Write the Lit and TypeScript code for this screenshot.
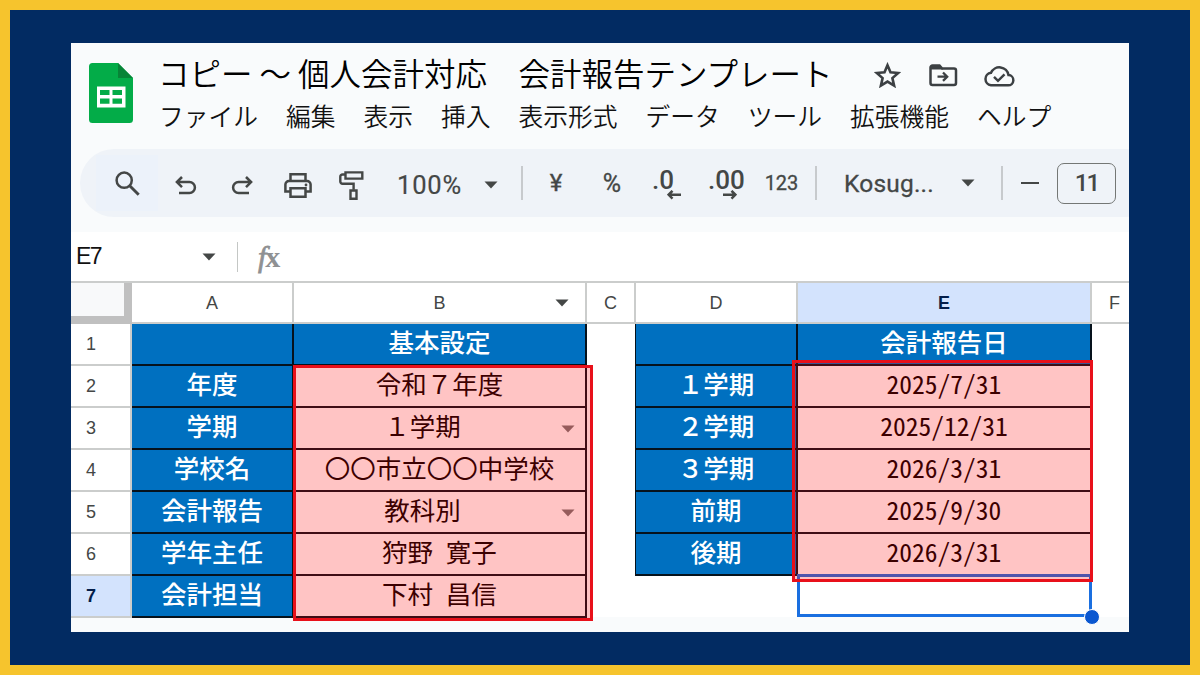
import { LitElement, html, css, svg, nothing } from 'lit'
import { customElement, property, state } from 'lit/decorators.js'
import { classMap } from 'lit/directives/class-map.js'

type Kind = 'plain' | 'label' | 'value'
type Cell = { text?: string; kind: Kind; dropdown?: boolean }

const TITLE = 'コピー ～ 個人会計対応　会計報告テンプレート'
const MENUS = ['ファイル', '編集', '表示', '挿入', '表示形式', 'データ', 'ツール', '拡張機能', 'ヘルプ']
const COLUMNS = ['A', 'B', 'C', 'D', 'E', 'F']

const label = (text = ''): Cell => ({ text, kind: 'label' })
const value = (text: string, dropdown = false): Cell => ({ text, kind: 'value', dropdown })
const blank: Cell = { kind: 'plain' }

const ROWS: Cell[][] = [
  [label(), label('基本設定'), blank, label(), label('会計報告日'), blank],
  [label('年度'), value('令和７年度'), blank, label('１学期'), value('2025/7/31'), blank],
  [label('学期'), value('１学期', true), blank, label('２学期'), value('2025/12/31'), blank],
  [label('学校名'), value('〇〇市立〇〇中学校'), blank, label('３学期'), value('2026/3/31'), blank],
  [label('会計報告'), value('教科別', true), blank, label('前期'), value('2025/9/30'), blank],
  [label('学年主任'), value('狩野 寛子'), blank, label('後期'), value('2026/3/31'), blank],
  [label('会計担当'), value('下村 昌信'), blank, blank, blank, blank],
]

const caret = html`<svg class="caret" width="14" height="8" viewBox="0 0 14 8">
  <path d="M0.5 0.5h13L7 7.5z" fill="currentColor" />
</svg>`

const icons = {
  logo: svg`
    <path d="M3.500 0H29l15 15v41.500a3.500 3.500 0 0 1-3.500 3.500h-37A3.500 3.500 0 0 1 0 56.500v-53A3.500 3.500 0 0 1 3.500 0z" fill="#03ac48" />
    <path d="M29 0l15 15H29z" fill="#078437" />
    <path d="M8 23.500h28.500v21H8z" fill="#fff" />
    <path d="M11 27h9.500v5H11zM23.500 27H33v5h-9.500zM11 35.500h9.500v5.200H11zM23.500 35.500H33v5.200h-9.500z" fill="#03ac48" />`,
  star: svg`<path d="M13.500 3.200l3 7.100 7.700.7-5.800 5.100 1.700 7.500-6.600-4-6.600 4 1.700-7.500L2.800 11l7.700-.7z" fill="none" stroke="currentColor" stroke-width="2.600" />`,
  folder: svg`
    <path d="M1.500 3.500a2 2 0 0 1 2-2h7l2.700 3H25a2 2 0 0 1 2 2V19a2 2 0 0 1-2 2H3.500a2 2 0 0 1-2-2z" fill="none" stroke="currentColor" stroke-width="2.500" />
    <path d="M1.500 2h9l3.500 3.500H1.500z" fill="currentColor" />
    <path d="M8.500 12.700h9M14 8.500l4.200 4.200-4.200 4.200" fill="none" stroke="currentColor" stroke-width="2.300" />`,
  cloud: svg`
    <path d="M8 21.300h17a5.100 5.100 0 0 0 .5-10.200A9.200 9.200 0 0 0 8 8.800 6.300 6.300 0 0 0 8 21.300z" fill="none" stroke="currentColor" stroke-width="2.500" />
    <path d="M11 12.800l4 4 6.500-6.500" fill="none" stroke="currentColor" stroke-width="2.400" />`,
  search: svg`
    <circle cx="9.200" cy="9.200" r="7.600" fill="none" stroke="currentColor" stroke-width="2.500" />
    <path d="M14.700 14.700l9 9" fill="none" stroke="currentColor" stroke-width="2.900" />`,
  undo: svg`<path d="M7 1L1.900 6.100 7 11.200M2.200 6.100h12.200a5.500 5.500 0 0 1 0 11H4" fill="none" stroke="currentColor" stroke-width="2.500" />`,
  redo: svg`<path d="M15 1l5.100 5.100L15 11.200M19.800 6.100H7.600a5.500 5.500 0 0 0 0 11H18" fill="none" stroke="currentColor" stroke-width="2.500" />`,
  print: svg`
    <path d="M6.500 8V1.300h15V8M6.500 18.500H1.400v-7A3.500 3.500 0 0 1 4.900 8h18.200a3.500 3.500 0 0 1 3.500 3.500v7h-5.100" fill="none" stroke="currentColor" stroke-width="2.500" />
    <path d="M6.500 15.200h15v8.500h-15z" fill="none" stroke="currentColor" stroke-width="2.500" />
    <circle cx="22" cy="12" r="1.400" fill="currentColor" />`,
  roller: svg`
    <path d="M6.500 1.400h16.800v6.200H6.500zM6.500 3.500H3.500a2.200 2.200 0 0 0-2.200 2.200v4.800a2.200 2.200 0 0 0 2.200 2.200h11.100v6" fill="none" stroke="currentColor" stroke-width="2.400" />
    <path d="M11.500 19.500h6v8.200h-6z" fill="none" stroke="currentColor" stroke-width="2.400" />`,
  left: svg`<path d="M5.500.8L1.600 4.700l3.900 3.900M2 4.700h12" fill="none" stroke="currentColor" stroke-width="2.500" />`,
  right: svg`<path d="M8.500.8l3.900 3.900-3.900 3.900M12 4.700H0" fill="none" stroke="currentColor" stroke-width="2.500" />`,
}

function icon(name: keyof typeof icons, w: number, h: number) {
  return html`<svg width=${w} height=${h} viewBox="0 0 ${w} ${h}">${icons[name]}</svg>`
}

@customElement('sheet-header')
export class SheetHeader extends LitElement {
  static styles = css`
    :host {
      display: block;
      height: 106px;
      color: #111;
      font-family: 'Noto Sans CJK JP', sans-serif;
    }
    .header {
      display: flex;
      padding: 19.5px 0 0 18px;
    }
    .names {
      margin: -2.5px 0 0 25px;
      white-space: nowrap;
    }
    .top {
      display: flex;
      align-items: center;
      height: 24px;
      color: #3c4043;
    }
    .title {
      color: #000;
      font-size: 31.5px;
      font-weight: 350;
      line-height: 24px;
    }
    .top svg {
      display: block;
    }
    .star {
      margin: 6px 28px 0 41px;
    }
    .cloud {
      margin: 6px 0 0 25px;
    }
    .folder {
      margin-top: 6px;
    }
    .menus {
      display: flex;
      gap: 28px;
      margin: 16px 0 0 1px;
      font-size: 24.75px;
      font-weight: 350;
      line-height: 30px;
    }
  `

  render() {
    return html`
      <div class="header">
        ${icon('logo', 44, 60)}
        <div class="names">
          <div class="top">
            <span class="title">${TITLE}</span>
            <span class="star">${icon('star', 27, 26)}</span>
            <span class="folder">${icon('folder', 29, 23)}</span>
            <span class="cloud">${icon('cloud', 32, 23)}</span>
          </div>
          <div class="menus">${MENUS.map((m) => html`<span>${m}</span>`)}</div>
        </div>
      </div>
    `
  }
}

@customElement('sheet-toolbar')
export class SheetToolbar extends LitElement {
  static styles = css`
    :host {
      display: block;
      height: 83px;
      padding-left: 9px;
      font-family: Roboto, 'Liberation Sans', sans-serif;
    }
    svg {
      display: block;
    }
    .bar {
      display: flex;
      align-items: center;
      box-sizing: border-box;
      width: 1080px;
      height: 68px;
      padding-left: 16px;
      border-radius: 34px;
      background: #eff3f8;
      color: #444746;
      font-size: 24px;
    }
    .slot {
      display: flex;
      flex: none;
      align-items: center;
      justify-content: center;
      width: 56px;
      height: 68px;
    }
    .search {
      width: 62px;
      height: 56px;
      background: #ecf2fa;
    }
    .low {
      padding-top: 5px;
      box-sizing: border-box;
    }
    .roller {
      width: 50px;
    }
    .zoom {
      display: flex;
      align-items: center;
      justify-content: space-between;
      width: 101px;
      margin: 3px 23px 0 21px;
      font-size: 25.5px;
      letter-spacing: 0.8px;
      -webkit-text-stroke: 0.2px currentColor;
    }
    .sep {
      flex: none;
      width: 2px;
      height: 34px;
      background: #c7cacd;
    }
    .yen {
      margin-left: 5px;
      font-size: 24px;
      -webkit-text-stroke: 0.4px currentColor;
    }
    .percent {
      font-size: 25px;
    }
    .decimal {
      flex-direction: column;
      align-items: flex-start;
      box-sizing: border-box;
      padding: 3px 0 0 12px;
      font-size: 26px;
      font-weight: 500;
      line-height: 22px;
    }
    .decimal .arrow {
      margin: -1px 0 0 15px;
    }
    .num {
      width: 63px;
      padding-right: 4px;
      box-sizing: border-box;
      font-size: 20px;
    }
    .num,
    .percent {
      -webkit-text-stroke: 0.3px currentColor;
    }
    .font {
      display: flex;
      align-items: center;
      justify-content: space-between;
      width: 131px;
      margin: 0 26px 0 27px;
      font-size: 24.5px;
      letter-spacing: 0.2px;
      -webkit-text-stroke: 0.3px currentColor;
    }
    .minus {
      width: 18px;
      height: 2.5px;
      margin: 0 18px 0 18px;
      background: #444746;
    }
    .size {
      display: flex;
      align-items: center;
      justify-content: center;
      width: 57px;
      height: 39px;
      border: 1.5px solid #747775;
      border-radius: 7px;
      font-size: 24px;
      font-weight: 500;
      letter-spacing: -2px;
    }
  `

  render() {
    return html`
      <div class="bar">
        <span class="slot search">${icon('search', 25, 25)}</span>
        <span class="slot low">${icon('undo', 22, 19)}</span>
        <span class="slot low">${icon('redo', 22, 19)}</span>
        <span class="slot low">${icon('print', 28, 25)}</span>
        <span class="slot low roller">${icon('roller', 25, 29)}</span>
        <span class="zoom"><span>100%</span>${caret}</span>
        <span class="sep"></span>
        <span class="slot yen">¥</span>
        <span class="slot percent">%</span>
        <span class="slot decimal">.0<span class="arrow">${icon('left', 14, 10)}</span></span>
        <span class="slot decimal">.00<span class="arrow">${icon('right', 14, 10)}</span></span>
        <span class="slot num">123</span>
        <span class="sep"></span>
        <span class="font"><span>Kosug...</span>${caret}</span>
        <span class="sep"></span>
        <span class="minus"></span>
        <span class="size">11</span>
      </div>
    `
  }
}

@customElement('sheet-grid')
export class SheetGrid extends LitElement {
  static styles = css`
    :host {
      display: block;
      position: relative;
      font-family: 'Liberation Sans', sans-serif;
      color: #444746;
    }
    .row {
      display: grid;
      grid-template-columns: 61px 162px 293px 49px 162px 294px 60px;
      height: 42px;
    }
    .row > div {
      display: flex;
      position: relative;
      align-items: center;
      justify-content: center;
      box-sizing: border-box;
      border-right: 2px solid transparent;
      border-bottom: 2px solid transparent;
    }
    .heads {
      height: 43px;
      border-top: 2px solid #cbcdcc;
      box-sizing: border-box;
      background: #fff;
    }
    .row > .head {
      padding-top: 1px;
      border-color: #cbcdcc;
      font-size: 18px;
    }
    .row > .num {
      justify-content: flex-start;
      padding-left: 15px;
    }
    .row > .corner {
      border-right: 8px solid #c0c0c0;
      border-bottom: 8px solid #c0c0c0;
      background: #f8f9fa;
    }
    .row > .active {
      background: #d3e3fd;
      color: #041e49;
      font-weight: 700;
    }
    .row > .last {
      padding-right: 13px;
    }
    .row > .label,
    .row > .value {
      border-color: #06121c;
      font-family: 'Noto Sans CJK JP', sans-serif;
      font-size: 25.5px;
      line-height: 30px;
      padding-bottom: 6px;
    }
    .row > .label {
      background: #0070c0;
      color: #fff;
      font-weight: 500;
    }
    .row > .value {
      background: #fff;
      color: #000;
    }
    .row > .half {
      font-feature-settings: 'hwid';
    }
    .row > .dropdown {
      padding-right: 34px;
    }
    .row > .start {
      box-shadow: -1px 0 #06121c;
    }
    .caret {
      position: absolute;
      right: 16px;
    }
    .value .caret {
      right: 10px;
      top: 17px;
      color: #777;
    }
    .mark {
      position: absolute;
      box-sizing: border-box;
      border: 3px solid #e8101a;
      background: rgba(255, 0, 0, 0.23);
    }
    .basic {
      left: 222px;
      top: 84px;
      width: 300px;
      height: 256px;
    }
    .dates {
      left: 721px;
      top: 79px;
      width: 301px;
      height: 222px;
    }
    .selection {
      position: absolute;
      left: 726px;
      top: 293px;
      width: 295px;
      height: 43px;
      box-sizing: border-box;
      border: 3px solid #1a6fe0;
    }
    .handle {
      position: absolute;
      left: 1012.5px;
      top: 328px;
      width: 14px;
      height: 14px;
      border: 1px solid #fff;
      border-radius: 50%;
      background: #0b57d0;
    }
  `

  @property({ type: Number }) activeRow = 7
  @property() activeColumn = 'E'

  private renderCell(cell: Cell, col: number) {
    const classes = {
      [cell.kind]: true,
      dropdown: !!cell.dropdown,
      // dates and spaced names use half-width latin glyphs
      half: /[\d ]/.test(cell.text ?? ''),
      start: col === 3 && cell.kind === 'label',
    }
    return html`<div class=${classMap(classes)}>${cell.text ?? nothing}${cell.dropdown ? caret : nothing}</div>`
  }

  render() {
    return html`
      <div class="row heads">
        <div class="corner"></div>
        ${COLUMNS.map(
          (c) => html`<div class=${classMap({ head: true, active: c === this.activeColumn, last: c === 'F' })}>
            ${c}${c === 'B' ? caret : nothing}
          </div>`
        )}
      </div>
      ${ROWS.map(
        (row, i) => html`<div class="row">
          <div class=${classMap({ head: true, num: true, active: i + 1 === this.activeRow })}>${i + 1}</div>
          ${row.map((cell, c) => this.renderCell(cell, c))}
        </div>`
      )}
      <div class="selection"></div>
      <div class="mark basic"></div>
      <div class="mark dates"></div>
      <div class="handle"></div>
    `
  }
}

@customElement('app-root')
export class AppRoot extends LitElement {
  static styles = css`
    :host {
      display: block;
      box-sizing: border-box;
      width: 1200px;
      height: 675px;
      border: 10px solid #f6c42d;
      padding: 33px 61px;
      background: #022b62;
      overflow: hidden;
    }
    .panel {
      width: 1058px;
      height: 589px;
      overflow: hidden;
      background: #f9fbfc;
    }
    .formula {
      display: flex;
      align-items: center;
      height: 49px;
      background: #fff;
      color: #444746;
      font-family: 'Liberation Sans', sans-serif;
    }
    .ref {
      width: 126px;
      padding-left: 5px;
      color: #111;
      font-size: 23px;
      letter-spacing: -1.5px;
    }
    .line {
      width: 1px;
      height: 30px;
      margin: 0 20px 0 21px;
      background: #c4c7c5;
    }
    .fx {
      color: #8f9193;
      font: 700 30px/28px 'Liberation Serif', serif;
      letter-spacing: -1px;
    }
    .fx i {
      font-weight: 400;
      -webkit-text-stroke: 0.8px currentColor;
    }
    .sheet {
      height: 336px;
      background: #fff;
    }
  `

  @state() private selected = { column: 'E', row: 7 }

  render() {
    const { column, row } = this.selected
    return html`
      <div class="panel">
        <sheet-header></sheet-header>
        <sheet-toolbar></sheet-toolbar>
        <div class="formula">
          <span class="ref">${column}${row}</span>
          ${caret}
          <span class="line"></span>
          <span class="fx"><i>f</i>x</span>
        </div>
        <div class="sheet">
          <sheet-grid .activeRow=${row} .activeColumn=${column}></sheet-grid>
        </div>
      </div>
    `
  }
}

declare global {
  interface HTMLElementTagNameMap {
    'app-root': AppRoot
  }
}
